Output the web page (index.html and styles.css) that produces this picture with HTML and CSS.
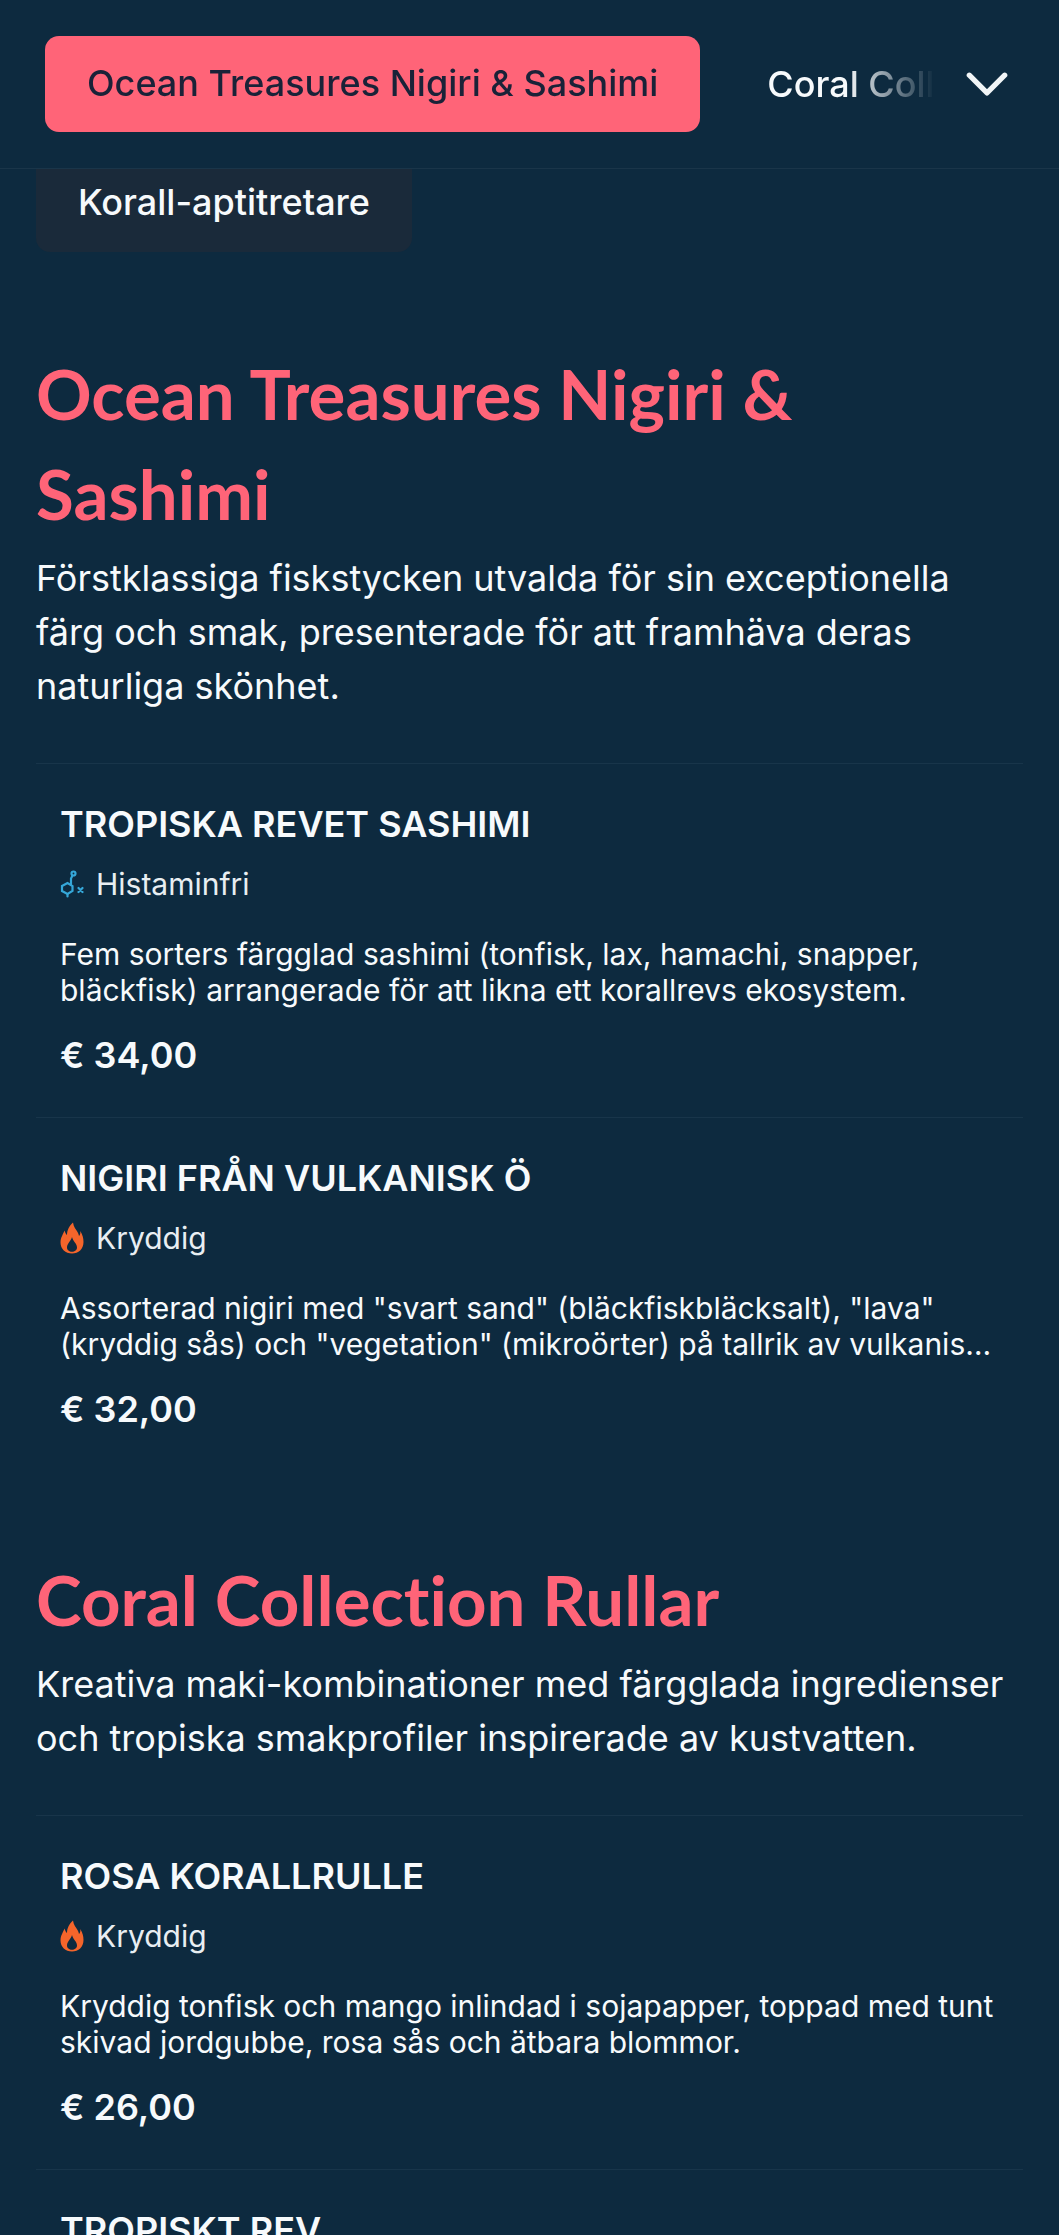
FILE: index.html
```html
<!DOCTYPE html>
<html lang="sv">
<head>
    <meta charset="UTF-8">
    <title>Meny</title>
    <link rel="stylesheet" href="styles.css">
</head>
<body>

<div id="main-nav">
    <div class="nav-scroll">
        <div class="nav-chip nav-chip-active">Ocean Treasures Nigiri &amp; Sashimi</div>
        <div class="nav-chip">Coral Collection Rullar</div>
    </div>
    <svg class="nav-arrow" viewBox="0 0 40 24" fill="none" stroke="#f1f5f7" stroke-width="5" stroke-linecap="round" stroke-linejoin="round"><path d="M3 4 L20 21 L37 4"/></svg>
</div>

<div class="sub-nav">
    <div class="sub-chip">Korall-aptitretare</div>
</div>

<div id="main-content">
    <div class="section">
        <h2 class="section-title">Ocean Treasures Nigiri &amp; Sashimi</h2>
        <p class="section-desc">Förstklassiga fiskstycken utvalda för sin exceptionella färg och smak, presenterade för att framhäva deras naturliga skönhet.</p>

        <div class="item">
            <div class="item-name">TROPISKA REVET SASHIMI</div>
            <div class="item-tag">
                <svg class="tag-icon" viewBox="0 0 24 28" fill="none" stroke="#35a7d8" stroke-width="2.2" stroke-linecap="round"><path d="M2 16 L7.5 13 L12.5 16 V21 L7.5 24 L2 21 Z"/><path d="M11 14.5 L11 8.5 L12.5 5.5"/><circle cx="13.5" cy="3.5" r="2"/><path d="M7.5 24 V26.5"/><path d="M18.5 18 L22.5 22 M22.5 18 L18.5 22"/></svg>
                Histaminfri
            </div>
            <p class="item-desc">Fem sorters färgglad sashimi (tonfisk, lax, hamachi, snapper, bläckfisk) arrangerade för att likna ett korallrevs ekosystem.</p>
            <div class="item-price">€ 34,00</div>
        </div>

        <div class="item">
            <div class="item-name">NIGIRI FRÅN VULKANISK Ö</div>
            <div class="item-tag">
                <svg class="tag-icon" viewBox="0 0 24 32"><path class="flame" fill-rule="evenodd" d="M13 0.5 C13.5 5 16 7.5 17.5 10 C18.3 11.3 18.8 12.5 19 14 C20.3 12.8 20.5 11 20.3 9 C22.8 13 23.5 16.5 23.5 20 C23.5 27 18.5 31.5 12 31.5 C5.5 31.5 0.5 27 0.5 20.5 C0.5 15.5 3 12.5 4.5 8.5 C5.3 10.5 5.8 12 7 13 C7 8 9.5 3.5 13 0.5 Z M12 15 C11 19 7 21.5 7 25.5 C7 28 9.2 29.8 12 29.8 C14.8 29.8 17 28 17 25.5 C17 21.5 13 19.5 12 15 Z"/></svg>
                Kryddig
            </div>
            <p class="item-desc">Assorterad nigiri med "svart sand" (bläckfiskbläcksalt), "lava" (kryddig sås) och "vegetation" (mikroörter) på tallrik av vulkanisk sten från ön.</p>
            <div class="item-price">€ 32,00</div>
        </div>
    </div>

    <div class="section">
        <h2 class="section-title">Coral Collection Rullar</h2>
        <p class="section-desc">Kreativa maki-kombinationer med färgglada ingredienser och tropiska smakprofiler inspirerade av kustvatten.</p>

        <div class="item">
            <div class="item-name">ROSA KORALLRULLE</div>
            <div class="item-tag">
                <svg class="tag-icon" viewBox="0 0 24 32"><path class="flame" fill-rule="evenodd" d="M13 0.5 C13.5 5 16 7.5 17.5 10 C18.3 11.3 18.8 12.5 19 14 C20.3 12.8 20.5 11 20.3 9 C22.8 13 23.5 16.5 23.5 20 C23.5 27 18.5 31.5 12 31.5 C5.5 31.5 0.5 27 0.5 20.5 C0.5 15.5 3 12.5 4.5 8.5 C5.3 10.5 5.8 12 7 13 C7 8 9.5 3.5 13 0.5 Z M12 15 C11 19 7 21.5 7 25.5 C7 28 9.2 29.8 12 29.8 C14.8 29.8 17 28 17 25.5 C17 21.5 13 19.5 12 15 Z"/></svg>
                Kryddig
            </div>
            <p class="item-desc">Kryddig tonfisk och mango inlindad i sojapapper, toppad med tunt skivad jordgubbe, rosa sås och ätbara blommor.</p>
            <div class="item-price">€ 26,00</div>
        </div>

        <div class="item">
            <div class="item-name">TROPISKT REV</div>
        </div>
    </div>
</div>

</body>
</html>
```

FILE: styles.css
```css
html, body {
    margin: 0;
    padding: 0;
    height: 2235px;
    overflow: hidden;
    background-color: #0d2a3f;
    color: #f7fafc;
    font-family: "Inter", "Liberation Sans", sans-serif;
}

#main-nav {
    height: 168px;
    padding-left: 45px;
    display: flex;
    align-items: center;
    border-bottom: 1px solid #1a3549;
}

.nav-scroll {
    width: 890px;
    display: flex;
    align-items: center;
    gap: 67px;
    overflow: hidden;
    -webkit-mask-image: linear-gradient(to right, #000 90%, transparent 100%);
    mask-image: linear-gradient(to right, #000 90%, transparent 100%);
}

.nav-chip {
    flex: none;
    font-size: 36px;
    font-weight: 500;
    line-height: 94px;
    white-space: nowrap;
    color: #f7fafc;
}

.nav-chip-active {
    height: 96px;
    padding: 0 42px;
    border-radius: 14px;
    color: #1a2238;
    background-color: #ff6478;
}

.nav-arrow {
    flex: none;
    width: 42px;
    height: 25px;
    margin: 0 0 2px 31px;
}

.sub-nav {
    height: 83px;
    padding-left: 36px;
    display: flex;
    align-items: flex-end;
    overflow: hidden;
}

.sub-chip {
    height: 83px;
    padding: 0 42px;
    font-size: 36px;
    font-weight: 500;
    line-height: 67px;
    border-radius: 0 0 14px 14px;
    background-color: #1a2a3a;
}

#main-content {
    padding: 0 36px;
}

.section {
    padding-top: 79px;
}

.section:first-child {
    padding-top: 92px;
}

.section-title {
    margin: 0 0 7px 0;
    font-family: "Lato", "Noto Sans", sans-serif;
    font-size: 69px;
    font-weight: 700;
    line-height: 100px;
    font-variant-ligatures: none;
    color: #ff6478;
}

.section-desc {
    margin: 0 0 50px 0;
    font-size: 36px;
    line-height: 54px;
}

.item {
    padding: 38px 24px 40px;
    border-top: 1px solid #18354a;
}

.item-name {
    font-size: 36px;
    font-weight: 600;
    line-height: 44px;
}

.item-tag {
    margin-top: 18px;
    display: flex;
    align-items: center;
    gap: 12px;
    font-size: 30px;
    line-height: 40px;
    color: #e8eef2;
}

.tag-icon {
    flex: none;
    width: 24px;
    height: 32px;
}

.flame {
    fill: #f4652b;
}

.item-desc {
    margin: 32px 0 0 0;
    font-size: 30px;
    line-height: 36px;
    display: -webkit-box;
    -webkit-box-orient: vertical;
    -webkit-line-clamp: 2;
    overflow: hidden;
}

.item-price {
    margin-top: 25px;
    font-size: 36px;
    font-weight: 600;
    line-height: 44px;
}
```
